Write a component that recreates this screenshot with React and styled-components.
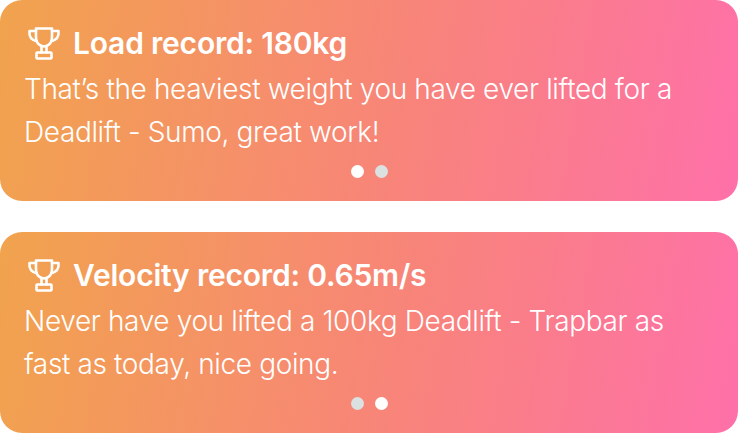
import React from "react";
import styled, { createGlobalStyle } from "styled-components";

const Global = createGlobalStyle`
  html, body { margin: 0; padding: 0; background: #fff; }
  body { font-family: "Inter", "Liberation Sans", sans-serif; }
`;

const Stack = styled.div`
  width: 738px;
  display: flex;
  flex-direction: column;
  gap: 31px;
`;

const Card = styled.section`
  box-sizing: border-box;
  height: 201px;
  border-radius: 22px;
  padding: 21px 36px 0 24px;
  background: linear-gradient(100deg, #f1a34d 0%, #f8847a 55%, #fe70a9 100%);
  color: #fff;
  display: flex;
  flex-direction: column;
`;

const Heading = styled.div`
  display: flex;
  align-items: center;
  gap: 11px;
  height: 44px;
  padding-left: 2px;
`;

const Title = styled.h2`
  margin: 0;
  font-size: 30px;
  font-weight: 600;
  letter-spacing: -0.2px;
  line-height: 44px;
`;

const Body = styled.p`
  margin: 3px 0 0;
  font-size: 28px;
  font-weight: 300;
  line-height: 43px;
  letter-spacing: -0.36px;
`;

const Dots = styled.div`
  display: flex;
  justify-content: center;
  gap: 11px;
  margin: auto -12px 23px 0;
`;

const Dot = styled.span`
  width: 13px;
  height: 13px;
  border-radius: 50%;
  background: ${(p) => (p.$active ? "#ffffff" : "#dbe0e1")};
`;

const Trophy = () => (
  <svg width="36" height="36" viewBox="0 0 36 36" fill="none" stroke="#fff" strokeWidth="2.6" strokeLinejoin="round" strokeLinecap="round">
    <path d="M10 3.5h16v9c0 5.2-3.4 9-8 9s-8-3.8-8-9z" />
    <path d="M10 6H3.5c-.6 5.6 2.2 9.2 7.4 10.2" />
    <path d="M26 6h6.5c.6 5.6-2.2 9.2-7.4 10.2" />
    <path d="M15.5 21v6.5M20.5 21v6.5" />
    <rect x="10.5" y="27.5" width="15" height="6" rx="0.8" />
  </svg>
);

const records = [
  { title: "Load record: 180kg", text: "That’s the heaviest weight you have ever lifted for a Deadlift - Sumo, great work!", active: 0 },
  { title: "Velocity record: 0.65m/s", text: "Never have you lifted a 100kg Deadlift - Trapbar as fast as today, nice going.", active: 1 },
];

export default function App() {
  return (
    <>
      <Global />
      <Stack>
        {records.map((r) => (
          <Card key={r.title}>
            <Heading>
              <Trophy />
              <Title>{r.title}</Title>
            </Heading>
            <Body>{r.text}</Body>
            <Dots>
              <Dot $active={r.active === 0} />
              <Dot $active={r.active === 1} />
            </Dots>
          </Card>
        ))}
      </Stack>
    </>
  );
}
